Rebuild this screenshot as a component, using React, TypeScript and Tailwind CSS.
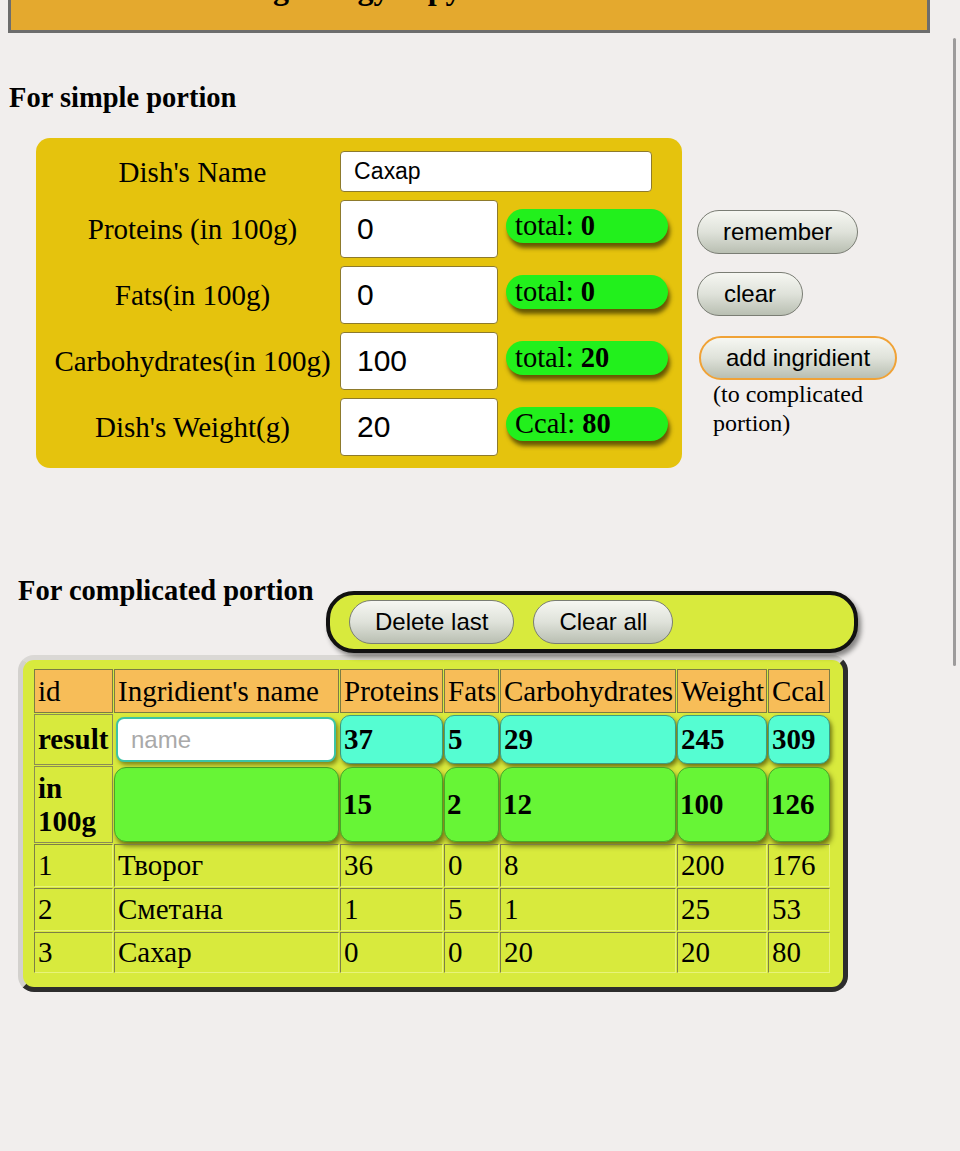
const btn =
  "h-[44px] rounded-full border border-[#7a7d74] bg-gradient-to-b from-[#f6f7f2] via-[#dfe2da] to-[#b9bfb2] font-['Liberation_Sans',sans-serif] text-[24px] leading-none text-black";

const rows = [
  { label: "Proteins (in 100g)", value: "0", tag: "total:", total: "0" },
  { label: "Fats(in 100g)", value: "0", tag: "total:", total: "0" },
  { label: "Carbohydrates(in 100g)", value: "100", tag: "total:", total: "20" },
  { label: "Dish's Weight(g)", value: "20", tag: "Ccal:", total: "80" },
];

const items = [
  ["1", "Творог", "36", "0", "8", "200", "176"],
  ["2", "Сметана", "1", "5", "1", "25", "53"],
  ["3", "Сахар", "0", "0", "20", "20", "80"],
];

const result = ["37", "5", "29", "245", "309"];
const per100 = ["15", "2", "12", "100", "126"];

export default function App() {
  return (
    <div className="relative min-h-[1151px] bg-[#f1eeed] font-['Liberation_Serif',serif] text-black">
      {/* page is scrolled: only the bottom of the title bar shows */}
      <header className="ml-[8px] flex h-[33px] w-[922px] flex-col justify-end overflow-hidden border-x-[3px] border-b-[3px] border-[#6d6d6d] bg-[#e4a92e] pl-[150px]">
        <h1 className="mb-[24px] text-[32px] font-bold leading-[36px]">Counting energy copy</h1>
      </header>

      <h2 className="ml-[9px] mt-[49px] text-[28.5px] font-bold leading-[32px]">For simple portion</h2>

      <div className="mt-[24px] flex items-start">
        <div className="ml-[36px] grid w-[646px] grid-cols-[285px_161px_162px] items-center gap-x-[5px] gap-y-[8px] rounded-[14px] bg-[#e5c30d] pb-[12px] pl-[14px] pr-[14px] pt-[13px]">
          <div className="text-center text-[29px] leading-[32px]">Dish's Name</div>
          <input
            defaultValue="Сахар"
            className="col-span-2 h-[41px] w-[312px] rounded-[4px] border border-[#8d7a2c] bg-white pl-[13px] font-['Liberation_Sans',sans-serif] text-[23px] outline-none"
          />
          {rows.map((r) => (
            <>
              <div key={r.label} className="text-center text-[29px] leading-[32px]">
                {r.label}
              </div>
              <input
                defaultValue={r.value}
                className="h-[58px] w-[158px] rounded-[4px] border border-[#8d7a2c] bg-white pl-[16px] font-['Liberation_Sans',sans-serif] text-[30px] outline-none"
              />
              <div className="mb-[6px] flex h-[34px] items-center rounded-full bg-[#22f01c] pl-[9px] text-[28.5px] leading-none shadow-[2px_5px_4px_rgba(70,60,0,0.8)]">
                {r.tag}&nbsp;<b>{r.total}</b>
              </div>
            </>
          ))}
        </div>

        <div className="ml-[15px] mt-[72px] flex flex-col items-start">
          <button className={`${btn} px-[25px]`}>remember</button>
          <button className={`${btn} mt-[18px] px-[26px]`}>clear</button>
          <button className={`${btn} ml-[2px] mt-[20px] h-[42px] border-2 border-[#f0a236] px-[25px]`}>
            add ingridient
          </button>
          <p className="ml-[16px] w-[170px] text-[24px] leading-[29px]">(to complicated portion)</p>
        </div>
      </div>

      <div className="ml-[18px] mt-[107px]">
        <div className="flex items-start">
          <h2 className="w-[308px] whitespace-nowrap text-[28.5px] font-bold leading-[32px]">For complicated portion</h2>
          <div className="mt-[16px] flex h-[62px] w-[532px] items-center gap-[19px] rounded-[28px] border-4 border-[#111] bg-[#d8ea3d] pl-[19px] shadow-[3px_4px_5px_rgba(0,0,0,0.45)]">
            <button className={`${btn} px-[25px]`}>Delete last</button>
            <button className={`${btn} px-[25px]`}>Clear all</button>
          </div>
        </div>

        <div className="mt-[2px] w-[830px] rounded-[16px] border-[5px] border-b-[#2d2d2d] border-l-[#d3d1ce] border-r-[#2d2d2d] border-t-[#dad8d5] bg-[#d8ea3d] pb-[13px] pl-[10px] pt-[8px]">
          <table className="w-[798px] table-fixed border-separate border-spacing-[1px] text-[29px] leading-[33px]">
            <colgroup>
              <col className="w-[79px]" />
              <col className="w-[225px]" />
              <col className="w-[103px]" />
              <col className="w-[55px]" />
              <col className="w-[176px]" />
              <col className="w-[90px]" />
              <col className="w-[62px]" />
            </colgroup>
            <thead>
              <tr>
                {["id", "Ingridient's name", "Proteins", "Fats", "Carbohydrates", "Weight", "Ccal"].map((h) => (
                  <th
                    key={h}
                    className="h-[44px] whitespace-nowrap border border-[#7b7c44] bg-[#f7bd58] px-[3px] text-left font-normal"
                  >
                    {h}
                  </th>
                ))}
              </tr>
            </thead>
            <tbody>
              <tr>
                <td className="h-[51px] border border-[#8b8c55] px-[3px] font-bold">result</td>
                <td className="p-0">
                  <input
                    placeholder="name"
                    className="ml-[2px] h-[45px] w-[220px] rounded-[8px] border-2 border-[#3cc4a5] bg-white pl-[13px] font-['Liberation_Sans',sans-serif] text-[24px] shadow-[2px_3px_4px_rgba(70,70,0,0.6)] outline-none placeholder:text-[#a9a9a9]"
                  />
                </td>
                {result.map((v, i) => (
                  <td key={i} className="p-0">
                    <div className="flex h-[49px] items-center rounded-[10px] border border-[#3d9c84] bg-[#55fdd2] pl-[3px] font-bold shadow-[2px_3px_4px_rgba(70,70,0,0.7)]">
                      {v}
                    </div>
                  </td>
                ))}
              </tr>
              <tr>
                <td className="h-[77px] border border-[#8b8c55] px-[3px] font-bold">in 100g</td>
                <td className="p-0">
                  <div className="h-[75px] rounded-[12px] border border-[#4aa52a] bg-[#67f536] shadow-[2px_4px_5px_rgba(70,70,0,0.7)]" />
                </td>
                {per100.map((v, i) => (
                  <td key={i} className="p-0">
                    <div className="flex h-[75px] items-center rounded-[12px] border border-[#4aa52a] bg-[#67f536] pl-[2px] font-bold shadow-[2px_4px_5px_rgba(70,70,0,0.7)]">
                      {v}
                    </div>
                  </td>
                ))}
              </tr>
              {items.map((row, ri) => (
                <tr key={ri}>
                  {row.map((c, ci) => (
                    <td
                      key={ci}
                      className={`${ri === 2 ? "h-[41px]" : "h-[43px]"} border border-b-[#e8f37a] border-l-[#7d7e47] border-r-[#e8f37a] border-t-[#7d7e47] px-[3px]`}
                    >
                      {c}
                    </td>
                  ))}
                </tr>
              ))}
            </tbody>
          </table>
        </div>
      </div>

      {/* iOS scroll indicator */}
      <div className="absolute right-[4px] top-[38px] h-[628px] w-[3px] rounded-full bg-[#9d9b9b]" />
    </div>
  );
}
